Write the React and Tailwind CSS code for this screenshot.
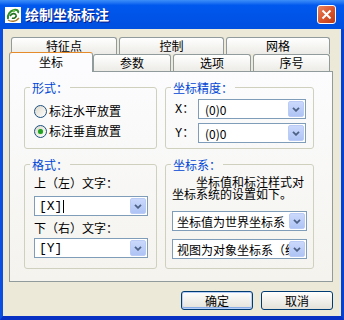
import React from 'react';

const cjk = "font-['Noto_Sans_CJK_SC','Noto_Sans',sans-serif]";

function AppIcon() {
  return (
    <svg width="16" height="16" viewBox="0 0 16 16">
      <rect x="0" y="0" width="16" height="16" fill="#ffffff" />
      <path d="M3 12 C2 8 5 4 9 3 C12 2 14 4 13 6" stroke="#2f8f2f" strokeWidth="2" fill="none" />
      <path d="M5 9 C7 6 10 6 11 8 C12 10 9 12 7 11" stroke="#1f6e1f" strokeWidth="1.6" fill="none" />
      <path d="M3 13 C6 15 11 15 14 11" stroke="#a87a2c" strokeWidth="1.4" fill="none" />
      <circle cx="9" cy="4" r="1.2" fill="#6fc24a" />
    </svg>
  );
}

function Radio({ checked, label }) {
  return (
    <div className="h-[20px] flex items-center">
      <span className="w-[13px] h-[13px] rounded-full border border-[#1C5180] bg-linear-to-br from-[#DCD8CB] to-white flex items-center justify-center">
        {checked && <span className="w-[5px] h-[5px] rounded-full bg-[#21A121] shadow-[0_0_1px_#6fd46f]" />}
      </span>
      <span className="ml-[2px]">{label}</span>
    </div>
  );
}

function Combo({ value, width, mono, cursor, pad = 'pl-[3px]' }) {
  return (
    <div className="h-[20px] border border-[#7F9DB9] bg-white flex p-px" style={{ width }}>
      <div className={`flex-1 overflow-hidden whitespace-nowrap leading-[17px] ${pad} ${mono ? "font-['Liberation_Mono',monospace] text-[13px]" : ''}`}>
        {value}
        {cursor && <span className="inline-block w-px h-[13px] bg-black align-middle ml-px" />}
      </div>
      <span className="w-[16px] h-full rounded-[2px] border border-[#BACCF6] bg-linear-to-b from-[#CAD8FB] to-[#AFC4F5] flex items-center justify-center">
        <svg width="8" height="5" viewBox="0 0 8 5">
          <path d="M1 0.8 L4 3.8 L7 0.8" stroke="#4D6185" strokeWidth="1.8" fill="none" />
        </svg>
      </span>
    </div>
  );
}

function Group({ title, className, children }) {
  return (
    <fieldset className={`border border-[#D0D0BF] rounded-[3px] px-[6px] m-0 min-w-0 ${className}`}>
      <legend className="ml-[-1px] px-[2px] text-[#0046D5] leading-[13px]">{title}</legend>
      {children}
    </fieldset>
  );
}

const backTab = 'h-[17px] border border-b-0 border-[#919B9C] rounded-t-[3px] bg-linear-to-b from-white to-[#ECEBE6] flex items-center justify-center';

export default function App() {
  return (
    <div className={`w-[344px] h-[320px] flex flex-col overflow-hidden text-[12px] text-black ${cjk}`}>
      <div className="h-[29px] shrink-0 flex items-center pl-[5px] pr-[8px] bg-linear-to-b from-[#3D8EF8] via-[#0058EE] via-[18%] to-[#004FE0]">
        <AppIcon />
        <span className="ml-[4px] text-white font-bold text-[14px] [text-shadow:1px_1px_#0A1883]">绘制坐标标注</span>
        <button className="ml-auto w-[19px] h-[19px] rounded-[3px] border border-white bg-linear-to-br from-[#E8845E] via-[#D9562D] to-[#BE3A14] flex items-center justify-center">
          <svg width="11" height="11" viewBox="0 0 11 11">
            <path d="M1.5 1.5 L9.5 9.5 M9.5 1.5 L1.5 9.5" stroke="#ffffff" strokeWidth="2" />
          </svg>
        </button>
      </div>

      <div className="flex-1 flex flex-col bg-[#ECE9D8] border-l-[3px] border-r-[3px] border-b-[4px] border-l-[#0B4FE0] border-r-[#0342D2] border-b-[#0831C4]">
        <div className="mt-[8px] ml-[8px] flex gap-[2px]">
          <div className={`${backTab} w-[106px]`}>特征点</div>
          <div className={`${backTab} w-[105px]`}>控制</div>
          <div className={`${backTab} w-[104px]`}>网格</div>
        </div>
        <div className="ml-[6px] h-[17px] flex items-end">
          <div className="relative z-10 w-[84px] h-[20px] -mb-px rounded-t-[3px] border-x border-t border-[#919B9C] border-t-[#E68B2C] bg-[#FCFCFE] flex flex-col">
            <div className="h-[2px] bg-[#FFC73C]" />
            <div className="flex-1 flex items-center justify-center pb-[2px]">坐标</div>
          </div>
          <div className={`${backTab} w-[78px]`}>参数</div>
          <div className={`${backTab} w-[78px] ml-[2px]`}>选项</div>
          <div className={`${backTab} w-[77px] ml-[2px]`}>序号</div>
        </div>

        <div className="ml-[6px] w-[324px] h-[211px] border border-[#919B9C] bg-linear-to-b from-[#FCFCFE] to-[#F4F3EE] pl-[14px] pt-[9px]">
          <div className="flex gap-[8px]">
            <Group title="形式：" className="w-[133px] h-[68px]">
              <div className="pl-[3px] pt-[7px]">
                <Radio label="标注水平放置" />
                <Radio checked label="标注垂直放置" />
              </div>
            </Group>
            <Group title="坐标精度：" className="w-[149px] h-[68px]">
              <div className="pl-[3px] pt-[5px]">
                <div className="flex items-center">
                  <span className="w-[23px]"><span className="font-['Liberation_Mono',monospace]">X</span>：</span>
                  <Combo value="(0)0" width={108} pad="pl-[5px]" />
                </div>
                <div className="flex items-center mt-[4px]">
                  <span className="w-[23px]"><span className="font-['Liberation_Mono',monospace]">Y</span>：</span>
                  <Combo value="(0)0" width={108} pad="pl-[5px]" />
                </div>
              </div>
            </Group>
          </div>
          <div className="flex gap-[8px] mt-[9px]">
            <Group title="格式：" className="w-[133px] h-[111px]">
              <div className="pl-[3px] pt-[4px]">
                <div className="h-[16px] leading-[16px]">上（左）文字：</div>
                <div className="mt-[5px]"><Combo value="[X]" width={114} mono cursor /></div>
                <div className="h-[16px] leading-[16px] mt-[4px]">下（右）文字：</div>
                <div className="mt-[2px]"><Combo value="[Y]" width={114} mono /></div>
              </div>
            </Group>
            <Group title="坐标系：" className="w-[149px] h-[111px]">
              <div className="pt-[5px]">
                <p className="w-[135px] indent-[24px] leading-[12px]">坐标值和标注样式对坐标系统的设置如下。</p>
                <div className="mt-[11px]"><Combo value="坐标值为世界坐标系" width={135} /></div>
                <div className="mt-[8px]"><Combo value="视图为对象坐标系（统一）" width={135} /></div>
              </div>
            </Group>
          </div>
        </div>

        <div className="mt-[9px] pr-[8px] flex justify-end gap-[8px]">
          <button className="w-[72px] h-[19px] rounded-[3px] border border-[#003C74] bg-linear-to-b from-white to-[#E3E1D8] shadow-[inset_0_0_0_1px_#B7CEF6,inset_0_-1px_0_1px_#8AADE8] flex items-center justify-center">确定</button>
          <button className="w-[72px] h-[19px] rounded-[3px] border border-[#003C74] bg-linear-to-b from-white to-[#E3E1D8] flex items-center justify-center">取消</button>
        </div>
      </div>
    </div>
  );
}
